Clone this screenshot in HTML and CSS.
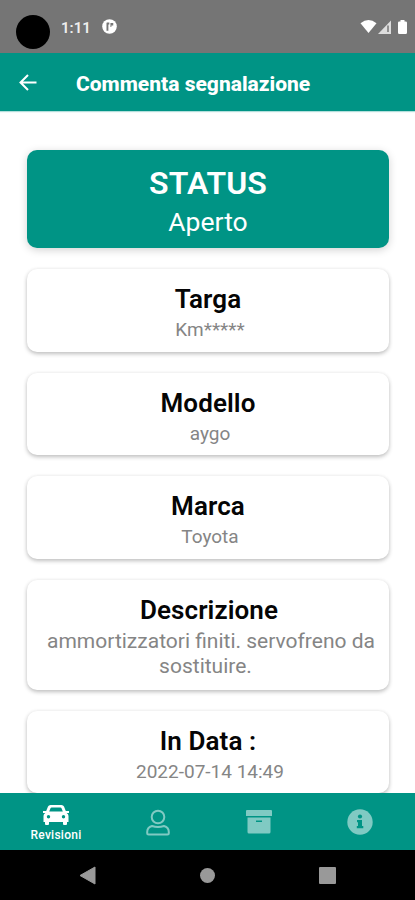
FILE: index.html
```html
<!DOCTYPE html>
<html lang="it">
<head>
<meta charset="utf-8">
<title>Commenta segnalazione</title>
<link rel="stylesheet" href="styles.css">
</head>
<body>
<div class="screen">
  <div class="statusbar">
    <span class="camera"></span>
    <span class="clock">1:11</span>
    <svg class="app-icon" width="15" height="15" viewBox="0 0 16 16"><circle cx="8" cy="8" r="7.800" fill="#fff"/><path d="M5.800 4v8.500M5.200 4.800h2.600" fill="none" stroke="#757575" stroke-width="2"/><path d="M9 4.200h3v2.600h-2V8.500H9z" fill="#757575"/></svg>
    <svg class="signals" width="48" height="16" viewBox="0 0 48 16">
      <path d="M.5 4.200Q8.500-2.200 16.500 4.200L8.500 14z" fill="#fff"/>
      <path d="M18 15L31 1.500V15z" fill="#ddd"/>
      <path d="M28 6.500V13" stroke="#757575" stroke-width="1.500"/>
      <path d="M40.500 1h4v1.500h1.200q1.300 0 1.300 1.300v9.700q0 1.500-1.300 1.500h-6.400q-1.300 0-1.300-1.500V3.800q0-1.300 1.300-1.300h1.200z" fill="#fff"/>
    </svg>
  </div>
  <header class="appbar">
    <svg class="back" width="18" height="17" viewBox="0 0 18 17"><path d="M17.500 8.500H1.500M9 1L1.500 8.500 9 16" fill="none" stroke="#fff" stroke-width="2"/></svg>
    <h1>Commenta segnalazione</h1>
  </header>
  <main class="content">
    <section class="card status"><h2>STATUS</h2><p>Aperto</p></section>
    <section class="card"><h2>Targa</h2><p>Km*****</p></section>
    <section class="card"><h2>Modello</h2><p>aygo</p></section>
    <section class="card"><h2>Marca</h2><p>Toyota</p></section>
    <section class="card long"><h2>Descrizione</h2><p>ammortizzatori finiti. servofreno da <span class="last-line">sostituire.</span></p></section>
    <section class="card"><h2>In Data :</h2><p>2022-07-14 14:49</p></section>
  </main>
  <nav class="tabs">
    <a class="tab active">
      <svg width="26" height="20" viewBox="0 0 26 20"><path fill="#fff" fill-rule="evenodd" d="M7.500 0h11q1.800 0 2.500 1.600L22.800 6H26v2h-2.300q1.800.8 1.800 3V17H24v2q0 1-1 1h-2q-1 0-1-1v-2H6v2q0 1-1 1H3q-1 0-1-1v-2H.5v-6q0-2.200 1.800-3H0V6h3.200L5 1.600Q5.700 0 7.500 0zM8.600 2.500q-.8 0-1.100.7L6.200 6.500h13.600l-1.300-3.300q-.3-.7-1.100-.7zM5.500 10a1.700 1.700 0 1 0 0 3.400 1.700 1.700 0 0 0 0-3.400zM20.500 10a1.700 1.700 0 1 0 0 3.400 1.700 1.700 0 0 0 0-3.400z"/></svg>
      <span>Revisioni</span>
    </a>
    <a class="tab">
      <svg width="24" height="27" viewBox="0 0 24 27"><g fill="none" stroke="#80cac3" stroke-width="2"><circle cx="12" cy="8" r="6.300"/><path d="M6 17q6 2 12 0 4.800 1.300 4.800 6v1q0 1.500-1.500 1.500H2.700q-1.500 0-1.500-1.500v-1Q1.200 18.300 6 17z"/></g></svg>
    </a>
    <a class="tab">
      <svg width="26" height="24" viewBox="0 0 26 24"><path fill="#80cac3" fill-rule="evenodd" d="M1 0h24q1 0 1 1v5H0V1q0-1 1-1zM1.500 7.500h23V22q0 1.500-1.500 1.500H3Q1.500 23.500 1.500 22zM10 10.500V12h6v-1.500z"/></svg>
    </a>
    <a class="tab">
      <svg width="26" height="26" viewBox="0 0 26 26"><circle cx="13" cy="13" r="12.700" fill="#80cac3"/><circle cx="13" cy="7.500" r="2.100" fill="#009485"/><path fill="#009485" d="M10 11h5v6h1.300v2.300H9.800V17H11v-3.700h-1z"/></svg>
    </a>
  </nav>
  <div class="system-nav">
    <svg width="17" height="19" viewBox="0 0 17 19"><path d="M16 1v17L1 9.500z" fill="#999" stroke="#999" stroke-linejoin="round"/></svg>
    <span class="home"></span>
    <span class="recent"></span>
  </div>
</div>
</body>
</html>
```
FILE: styles.css
```css
* { box-sizing: border-box; }
body, h1, h2, p { margin: 0; }
body { font-family: Roboto, sans-serif; background: #fff; }
.screen { width: 415px; height: 900px; display: flex; flex-direction: column; overflow: hidden; }

.statusbar { flex: none; height: 53px; background: #757575; display: flex; align-items: center; padding: 0 7px 0 16px; color: #fff; }
.camera { width: 34px; height: 34px; border-radius: 50%; background: #000; margin-top: 11px; }
.clock { color: #eee; font-size: 15px; font-weight: 600; letter-spacing: 0; margin-left: 11px; line-height: 18px; margin-top: 2px; }
.app-icon { margin-left: 11px; }
.signals { margin-left: auto; }

.appbar { flex: none; height: 58px; background: #009485; display: flex; align-items: center; padding: 1px 0 0 19px; box-shadow: 0 1px 1px #0096884d; }
.appbar h1 { margin: 2px 0 0 39px; color: #fff; font-size: 21px; font-weight: 800; line-height: 28px; white-space: nowrap; }

.content { flex: 1; min-height: 0; overflow: hidden; padding: 39px 26px 0 27px; display: flex; flex-direction: column; gap: 21px; }
.card { flex: none; height: 82.600px; padding: 14px 14px 0 18px; border-radius: 10px; background: #fff; box-shadow: 0 2px 4px #0000003d, 0 0 4px #0000000d; text-align: center; }
.card h2 { color: #050505; font-size: 26px; font-weight: 600; line-height: 32px; margin-right: 4px; letter-spacing: .1px; }
.card p { color: #858585; font-size: 19px; font-weight: 400; line-height: 25px; margin-top: 2px; }
.card.status { height: 98px; padding: 15px 14px 0; background: #009485; box-shadow: 0 2px 8px #0000002e; }
.card.status h2, .card.status p { color: #fff; margin-right: 0; }
.card.status h2 { font-size: 32px; line-height: 37px; }
.card.status p { font-size: 26.500px; line-height: 36px; }
.card.long { height: 110px; padding-right: 12px; }
.card.long p { font-size: 21px; margin-top: 3px; }
.last-line { display: block; padding-right: 11px; }

.tabs { flex: none; height: 57px; background: #009485; display: grid; grid-template-columns: 112px 91px 111px 92px; align-items: center; }
.tab { display: flex; flex-direction: column; align-items: center; padding-top: 1px; }
.tab.active { padding-top: 4px; }
.tab span { color: #fff; font-size: 12px; font-weight: 500; line-height: 14px; margin-top: 3px; letter-spacing: .25px; }

.system-nav { flex: none; height: 50px; background: #000; display: flex; align-items: center; padding-left: 79px; }
.home { width: 15px; height: 15px; border-radius: 50%; background: #999; margin-left: 104px; }
.recent { width: 17px; height: 17px; border-radius: 1px; background: #999; margin-left: 104px; }
```
